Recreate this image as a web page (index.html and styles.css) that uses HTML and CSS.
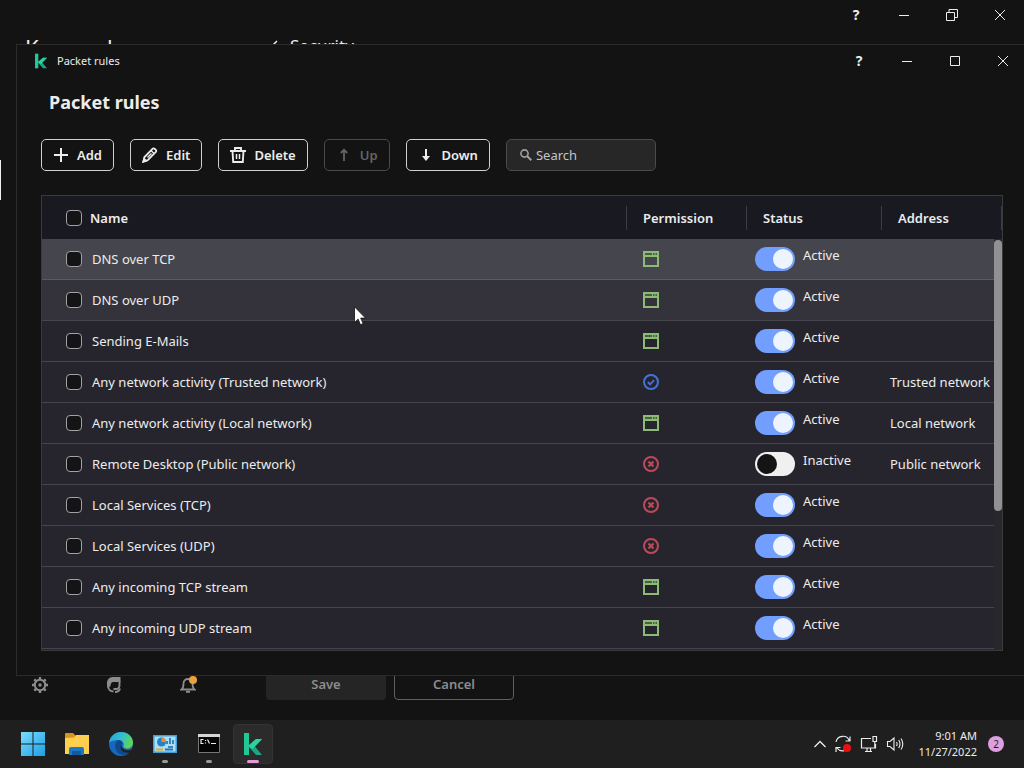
FILE: index.html
```
<!DOCTYPE html>
<html lang="en">

<head>
    <meta charset="UTF-8">
    <meta name="viewport" content="width=device-width, initial-scale=1.0">
    <title>Packet rules</title>
    <link rel="stylesheet" href="styles.css">
</head>

<body>
    <!-- shared icons -->
    <svg class="symbols" aria-hidden="true">
        <symbol id="minimize" viewBox="0 0 12 12"><path d="M1 6.5h10" stroke="currentColor" /></symbol>
        <symbol id="close" viewBox="0 0 12 12"><path d="M1 1l10 10M11 1L1 11" stroke="currentColor" /></symbol>
        <symbol id="maximize" viewBox="0 0 12 12"><path d="M1.5 1.5h9v9h-9z" fill="none" stroke="currentColor" /></symbol>
        <symbol id="restore" viewBox="0 0 12 12"><path d="M.5 3.5h8v8h-8zM3 3V.5h8.500v8H9" fill="none" stroke="currentColor" /></symbol>
        <symbol id="app-rules" viewBox="0 0 16 16"><path d="M1 1h14v14H1z" fill="none" stroke="currentColor" stroke-width="2" /><path d="M1 1h14v5H1z" fill="currentColor" /><path d="M2 3h7M10 3h1.500M12.500 3H14" stroke="#34402f" stroke-width="1.500" /></symbol>
        <symbol id="allowed" viewBox="0 0 16 16"><circle cx="8" cy="8" r="7" fill="none" stroke="currentColor" stroke-width="2" /><path d="M4.800 8l2.300 2.300 4-4.100" fill="none" stroke="currentColor" stroke-width="1.900" /></symbol>
        <symbol id="blocked" viewBox="0 0 16 16"><circle cx="8" cy="8" r="7" fill="none" stroke="currentColor" stroke-width="2" /><path d="M5.500 5.500l5 5M10.500 5.500l-5 5" stroke="currentColor" stroke-width="2.200" /></symbol>
        <symbol id="logo" viewBox="0 0 20 24">
            <path d="M1 1h5v22H1z" fill="#22c796" />
            <path d="M5 14L13 7h6l-7 7.500L19 23h-6z" fill="#1aa583" />
            <path d="M5 14L13 7h6l-9.500 10z" fill="#30cf9d" />
        </symbol>
    </svg>

    <main class="desktop">
        <section class="app-window">
            <header class="titlebar">
                <div class="window-controls">
                    <button class="control help" aria-label="Help">?</button>
                    <button class="control" aria-label="Minimize"><svg><use href="#minimize" /></svg></button>
                    <button class="control" aria-label="Restore"><svg><use href="#restore" /></svg></button>
                    <button class="control" aria-label="Close"><svg><use href="#close" /></svg></button>
                </div>
            </header>
            <div class="app-body">
                <nav class="sidebar">
                    <h2>Kaspersky</h2>
                    <span class="nav-marker"></span>
                    <div class="sidebar-tools">
                        <button class="tool" aria-label="Settings">
                            <svg viewBox="0 0 16 16"><circle cx="8" cy="8" r="5.200" fill="none" stroke="currentColor" stroke-width="2" /><circle cx="8" cy="8" r="1.700" fill="currentColor" /><path d="M8 0v3M8 13v3M0 8h3M13 8h3M2.300 2.300l2 2M11.700 11.700l2 2M2.300 13.700l2-2M11.700 4.300l2-2" stroke="currentColor" stroke-width="2.400" /></svg>
                        </button>
                        <button class="tool" aria-label="Support">
                            <svg viewBox="0 0 16 16"><path d="M14.500 0v5H7Q4.500 5.500 4.500 9L2 11.500C-.5 6 1.500 0 6.500 0z" fill="currentColor" /><path d="M2 8.500c0 4 2.500 6 5.500 6M13.500 4v4.500c0 2-1.500 3.500-4 3.500H7.500M9 15c2.500 0 4.500-1.500 5-3.500" fill="none" stroke="currentColor" stroke-width="1.900" /></svg>
                        </button>
                        <button class="tool" aria-label="Notifications">
                            <svg viewBox="0 0 16 16"><path d="M1.500 12.500c2-1.500 2-3 2-6C3.500 3.500 5.500 2 8 2s4.500 1.500 4.500 4.500c0 3 0 4.500 2 6z" fill="none" stroke="currentColor" stroke-width="1.800" /><path d="M6 14.800h4" stroke="currentColor" stroke-width="2" /></svg>
                            <span class="dot"></span>
                        </button>
                    </div>
                </nav>
                <div class="page">
                    <h2 class="page-title">
                        <svg viewBox="0 0 8 12"><path d="M7 1L2 6l5 5" fill="none" stroke="currentColor" stroke-width="1.500" /></svg>
                        Security
                    </h2>
                    <div class="page-actions">
                        <button class="save">Save</button>
                        <button class="cancel">Cancel</button>
                    </div>
                </div>
            </div>
        </section>

        <section class="dialog">
            <header class="titlebar dialog-titlebar">
                <svg class="logo"><use href="#logo" /></svg>
                <span class="caption">Packet rules</span>
                <div class="window-controls">
                    <button class="control help" aria-label="Help">?</button>
                    <button class="control" aria-label="Minimize"><svg><use href="#minimize" /></svg></button>
                    <button class="control" aria-label="Maximize"><svg><use href="#maximize" /></svg></button>
                    <button class="control" aria-label="Close"><svg><use href="#close" /></svg></button>
                </div>
            </header>
            <div class="dialog-body">
                <h1>Packet rules</h1>
                <div class="toolbar">
                    <button class="btn"><svg viewBox="0 0 16 16"><path d="M8 1v14M1 8h14" stroke="currentColor" stroke-width="2" /></svg>Add</button>
                    <button class="btn"><svg viewBox="0 0 16 16"><path d="M1.500 14.500l1-4.500 8-8.200c1.500-1.300 4.500 1.500 3.500 3L6 13z" fill="none" stroke="currentColor" stroke-width="1.800" /><path d="M9 3.500L12.500 7M5.500 10.500l4-4M1 15l3.500-1L2 11.500z" stroke="currentColor" stroke-width="1.400" fill="currentColor" /></svg>Edit</button>
                    <button class="btn"><svg viewBox="0 0 16 16"><path d="M0 4h16M5 4V1h6v3M2.500 4l.7 11h9.600l.7-11" fill="none" stroke="currentColor" stroke-width="1.900" /><path d="M6.500 7v5M9.500 7v5" stroke="currentColor" stroke-width="1.500" /></svg>Delete</button>
                    <button class="btn" disabled><svg viewBox="0 0 16 16"><path d="M8 3v11M4.800 6L8 2.800 11.200 6" fill="none" stroke="currentColor" stroke-width="1.800" /></svg>Up</button>
                    <button class="btn"><svg viewBox="0 0 16 16"><path d="M8 2v10" stroke="currentColor" stroke-width="2" /><path d="M4 9h8l-4 5z" fill="currentColor" /></svg>Down</button>
                    <label class="search">
                        <svg viewBox="0 0 12 12"><circle cx="4.500" cy="4.500" r="3.600" fill="none" stroke="currentColor" stroke-width="1.600" /><path d="M7 7l4.300 4.300" stroke="currentColor" stroke-width="2" /></svg>
                        <input type="text" placeholder="Search" aria-label="Search">
                    </label>
                </div>

                <div class="rules-container">
                    <table class="rules">
                        <thead>
                            <tr>
                                <th class="col-name"><label class="name"><input type="checkbox" class="check">Name</label></th>
                                <th class="col-permission">Permission</th>
                                <th class="col-status">Status</th>
                                <th class="col-address">Address</th>
                            </tr>
                        </thead>
                        <tbody>
                            <tr class="selected">
                                <td><label class="name"><input type="checkbox" class="check">DNS over TCP</label></td>
                                <td><svg class="permission app-rules"><use href="#app-rules" /></svg></td>
                                <td><label class="status"><input type="checkbox" class="toggle" checked>Active</label></td>
                                <td></td>
                            </tr>
                            <tr class="hovered">
                                <td><label class="name"><input type="checkbox" class="check">DNS over UDP</label></td>
                                <td><svg class="permission app-rules"><use href="#app-rules" /></svg></td>
                                <td><label class="status"><input type="checkbox" class="toggle" checked>Active</label></td>
                                <td></td>
                            </tr>
                            <tr>
                                <td><label class="name"><input type="checkbox" class="check">Sending E-Mails</label></td>
                                <td><svg class="permission app-rules"><use href="#app-rules" /></svg></td>
                                <td><label class="status"><input type="checkbox" class="toggle" checked>Active</label></td>
                                <td></td>
                            </tr>
                            <tr>
                                <td><label class="name"><input type="checkbox" class="check">Any network activity (Trusted network)</label></td>
                                <td><svg class="permission allowed"><use href="#allowed" /></svg></td>
                                <td><label class="status"><input type="checkbox" class="toggle" checked>Active</label></td>
                                <td>Trusted network</td>
                            </tr>
                            <tr>
                                <td><label class="name"><input type="checkbox" class="check">Any network activity (Local network)</label></td>
                                <td><svg class="permission app-rules"><use href="#app-rules" /></svg></td>
                                <td><label class="status"><input type="checkbox" class="toggle" checked>Active</label></td>
                                <td>Local network</td>
                            </tr>
                            <tr>
                                <td><label class="name"><input type="checkbox" class="check">Remote Desktop (Public network)</label></td>
                                <td><svg class="permission blocked"><use href="#blocked" /></svg></td>
                                <td><label class="status"><input type="checkbox" class="toggle">Inactive</label></td>
                                <td>Public network</td>
                            </tr>
                            <tr>
                                <td><label class="name"><input type="checkbox" class="check">Local Services (TCP)</label></td>
                                <td><svg class="permission blocked"><use href="#blocked" /></svg></td>
                                <td><label class="status"><input type="checkbox" class="toggle" checked>Active</label></td>
                                <td></td>
                            </tr>
                            <tr>
                                <td><label class="name"><input type="checkbox" class="check">Local Services (UDP)</label></td>
                                <td><svg class="permission blocked"><use href="#blocked" /></svg></td>
                                <td><label class="status"><input type="checkbox" class="toggle" checked>Active</label></td>
                                <td></td>
                            </tr>
                            <tr>
                                <td><label class="name"><input type="checkbox" class="check">Any incoming TCP stream</label></td>
                                <td><svg class="permission app-rules"><use href="#app-rules" /></svg></td>
                                <td><label class="status"><input type="checkbox" class="toggle" checked>Active</label></td>
                                <td></td>
                            </tr>
                            <tr>
                                <td><label class="name"><input type="checkbox" class="check">Any incoming UDP stream</label></td>
                                <td><svg class="permission app-rules"><use href="#app-rules" /></svg></td>
                                <td><label class="status"><input type="checkbox" class="toggle" checked>Active</label></td>
                                <td></td>
                            </tr>
                        </tbody>
                    </table>
                    <div class="scrollbar"><div class="scrollbar-thumb"></div></div>
                </div>
            </div>
        </section>

        <svg class="cursor" viewBox="0 0 12 20"><path d="M.5.800v15.700l3.600-3.400 2.400 5.600 2.600-1.100-2.400-5.500h4.800z" fill="#fff" stroke="#111" stroke-width=".8" /></svg>
    </main>

    <footer class="taskbar">
        <div class="apps">
            <button class="app" aria-label="Start">
                <svg viewBox="0 0 24 24"><defs><linearGradient id="win" x1="0" y1="0" x2="1" y2="1"><stop offset="0" stop-color="#7bdcfb" /><stop offset="1" stop-color="#1b9fe8" /></linearGradient></defs><path d="M0 0h11.500v11.500H0zM12.500 0H24v11.500H12.500zM0 12.500h11.500V24H0zM12.500 12.500H24V24H12.500z" fill="url(#win)" /></svg>
            </button>
            <button class="app" aria-label="File Explorer">
                <svg viewBox="0 0 24 24"><path d="M0 2q0-1 1-1h7l3 3v3H0z" fill="#d9951b" /><path d="M0 6l9-.5L11 3h13v19H0z" fill="#fcd04e" /><path d="M4 23v-6q0-2 2-2h11q2 0 2 2v6z" fill="#1c77c5" /><path d="M7 19h9v4H7z" fill="#135a9c" /></svg>
            </button>
            <button class="app" aria-label="Edge">
                <svg viewBox="0 0 24 24"><defs><linearGradient id="edge" x1="0" y1="0" x2="1" y2=".4"><stop offset="0" stop-color="#2a9fe0" /><stop offset=".6" stop-color="#35c1c9" /><stop offset="1" stop-color="#5fd455" /></linearGradient></defs><circle cx="12" cy="12" r="12" fill="#1568c0" /><path d="M0 11C1 4 6 0 12 0c7 0 12 5 12 10.500 0 4-3 6-6 6-2.500 0-4-1-3.500-2.500 1-3-1-6-5-6C5 8 1 9 0 11z" fill="url(#edge)" /><path d="M9.500 8C5 10 5 18 10 21.500c3 2 7 2 11-1-5 1.500-9-1-9.500-5-.3-3 1-4 2-3.500C13 9.500 11.500 8 9.500 8z" fill="#114a8b" /><path d="M13.500 11c-2 1-1.500 5 2 6.500 3 1.200 5.500.8 7.500-.5l1 1 0 3-4 0c-6 0-8.500-3-8.500-6 0-2 .8-3.500 2-4z" fill="#202020" /></svg>
            </button>
            <button class="app running" aria-label="Control Panel">
                <svg viewBox="0 0 24 24"><path d="M0 3h24v18H0z" fill="#3e9ed6" /><path d="M1.500 4.500h21v15h-21z" fill="#a9e0f8" /><circle cx="8.500" cy="10" r="4.500" fill="#2580c4" /><path d="M8.500 10V5.500a4.500 4.500 0 0 1 4.500 4.500z" fill="#f28a2c" /><path d="M14 12V9M17 12V6M20 12V8M15 15h5" stroke="#1767a5" stroke-width="1.500" /><path d="M3 17.500h7" stroke="#eba91e" stroke-width="2" /><path d="M12 17.500h8" stroke="#2872be" stroke-width="2" /></svg>
            </button>
            <button class="app running" aria-label="Command Prompt">
                <svg viewBox="0 0 24 24"><path d="M1.500 2.500h21v18h-21z" fill="#050505" stroke="#777" /><path d="M1 2h22v3H1z" fill="#d5d5d5" /><path d="M6.500 7.500H4v4h2.500M8.500 8v1M8.500 10.500v1M10.500 7.500l2 4M14 11.500h5" fill="none" stroke="#eee" stroke-width="1.200" /></svg>
            </button>
            <button class="app active" aria-label="Kaspersky"><svg><use href="#logo" /></svg></button>
        </div>
        <div class="tray">
            <svg class="chevron" viewBox="0 0 12 8"><path d="M.5 7L6 1.500 11.500 7" fill="none" stroke="currentColor" stroke-width="1.300" /></svg>
            <svg viewBox="0 0 18 18"><path d="M2 7a7 7 0 0 1 13.500-1M16 1.500V6h-4.500M15.500 10a7 7 0 0 1-12.500 3M2 17v-4.500h4.500" fill="none" stroke="currentColor" stroke-width="1.200" /><circle cx="13" cy="13" r="4" fill="#e81010" /></svg>
            <svg viewBox="0 0 18 18"><path d="M11 3.500H1.500v9.500h14V9M5 16.500h7M7 13v3M10.500 13v3M13 1.500h3.500v5H13zM14.800 6.500V13" fill="none" stroke="currentColor" stroke-width="1.200" /></svg>
            <svg viewBox="0 0 18 18"><path d="M1.500 6.500H4L8 3v12l-4-3.500H1.500z" fill="none" stroke="currentColor" stroke-width="1.100" /><path d="M10.500 7q1.300 2 0 4M12.700 5q2.600 4 0 8M15 3.500q3.600 5.500 0 11" fill="none" stroke="currentColor" stroke-width="1.100" /></svg>
            <div class="clock">
                <span>9:01 AM</span>
                <span>11/27/2022</span>
            </div>
            <span class="badge">2</span>
        </div>
    </footer>
</body>

</html>
```

FILE: styles.css
```
* {
    box-sizing: border-box;
    margin: 0;
    padding: 0;
}

body {
    font-family: 'Noto Sans', 'Open Sans', sans-serif;
    font-size: 13px;
    line-height: 16px;
    background-color: #131313;
    color: #ececec;
    height: 100vh;
    display: flex;
    flex-direction: column;
    overflow: hidden;
}

button,
input {
    font: inherit;
    color: inherit;
}

button {
    background: none;
    border: none;
}

.symbols {
    display: none;
}

.desktop {
    position: relative;
    flex: 1;
    min-height: 0;
    overflow: hidden;
}

/* title bars */
.titlebar {
    display: flex;
    align-items: center;
    height: 30px;
}

.window-controls {
    display: flex;
    margin-left: auto;
}

.control {
    display: flex;
    align-items: center;
    justify-content: center;
    width: 48px;
    height: 30px;
}

.control svg {
    width: 12px;
    height: 12px;
}

.help {
    font-size: 14px;
    font-weight: 700;
}

/* main window behind the dialog */
.app-window {
    display: flex;
    flex-direction: column;
    height: 100%;
}

.app-body {
    display: flex;
    flex: 1;
}

.sidebar {
    display: flex;
    flex-direction: column;
    width: 250px;
}

.sidebar h2 {
    font-size: 22px;
    font-weight: 400;
    line-height: 26px;
    padding: 4px 25px;
}

.nav-marker {
    width: 1px;
    height: 40px;
    margin-top: 96px;
    background-color: #f0f0f0;
}

.sidebar-tools {
    display: flex;
    gap: 58px;
    margin-top: auto;
    padding: 0 32px 27px;
}

.tool {
    position: relative;
    width: 16px;
    height: 16px;
    color: #8c8c8c;
}

.tool svg {
    display: block;
    width: 16px;
    height: 16px;
}

.dot {
    position: absolute;
    top: -1px;
    right: -1px;
    width: 8px;
    height: 8px;
    border-radius: 50%;
    background-color: #e9a23b;
}

.page {
    display: flex;
    flex-direction: column;
    flex: 1;
    padding: 0 16px 20px;
}

.page-title {
    display: flex;
    align-items: center;
    gap: 12px;
    font-size: 17px;
    font-weight: 400;
    line-height: 24px;
    padding: 4px;
}

.page-title svg {
    width: 8px;
    height: 12px;
}

.page-actions {
    display: flex;
    gap: 8px;
    margin-top: auto;
}

.save,
.cancel {
    width: 120px;
    height: 32px;
    border-radius: 4px;
    font-weight: 600;
    color: #8c8c8c;
}

.save {
    background-color: #252525;
}

.cancel {
    border: 1px solid #5f5f5f;
}

/* dialog */
.dialog {
    position: absolute;
    top: 44px;
    left: 16px;
    right: -4px;
    bottom: 44px;
    background-color: #131313;
    border: 1px solid #2b2b2b;
}

.dialog-titlebar {
    height: 32px;
    padding-left: 17px;
}

.logo {
    width: 14px;
    height: 16px;
}

.caption {
    margin-left: 9px;
    font-size: 11px;
}

.dialog-body {
    padding: 12px 24px;
}

h1 {
    font-size: 18px;
    line-height: 26px;
    padding-left: 8px;
    margin-bottom: 24px;
}

.toolbar {
    display: flex;
    gap: 16px;
    margin-bottom: 24px;
}

.btn {
    display: flex;
    align-items: center;
    gap: 8px;
    height: 32px;
    padding: 0 11px;
    border: 1px solid #d0d0d0;
    border-radius: 5px;
    font-weight: 600;
}

.btn:disabled {
    border-color: #4b4b4b;
    color: #646464;
}

.btn svg {
    width: 16px;
    height: 16px;
}

.search {
    display: flex;
    align-items: center;
    gap: 4px;
    width: 150px;
    height: 32px;
    padding: 0 13px;
    background-color: #272727;
    border: 1px solid #4b4b4b;
    border-radius: 5px;
}

.search svg {
    flex: none;
    width: 12px;
    height: 12px;
    color: #a0a0a0;
}

.search input {
    width: 100%;
    background: none;
    border: none;
    outline: none;
}

.search input::placeholder {
    color: #c4c4c4;
}

/* rules table */
.rules-container {
    position: relative;
    border: 1px solid #3a3a3c;
    padding-bottom: 1px;
    background-color: #26252e;
}

.rules {
    width: 100%;
    table-layout: fixed;
    border-collapse: separate;
    border-spacing: 0;
}

.rules th {
    height: 43px;
    padding: 0 16px;
    text-align: left;
    font-weight: 600;
    background: #191a21 linear-gradient(#3d3d44, #3d3d44) no-repeat right center / 1px 24px;
}

.col-permission {
    width: 120px;
}

.col-status {
    width: 135px;
}

.col-address {
    width: 120px;
}

.rules .col-name {
    padding-left: 24px;
}

.rules td {
    height: 41px;
    padding: 0 8px;
    border-bottom: 1px solid #46454e;
    white-space: nowrap;
}

.rules td:first-child {
    padding-left: 24px;
}

.rules td:nth-child(2) {
    padding-left: 16px;
}

.selected td {
    background-color: #45454d;
}

.rules .selected td {
    border-color: #5b5a63;
}

.hovered td {
    background-color: #34333c;
}

.name {
    display: flex;
    align-items: center;
    gap: 10px;
}

th .name {
    gap: 8px;
}

.check {
    appearance: none;
    width: 16px;
    height: 16px;
    border: 1px solid #a2a2a2;
    border-radius: 4px;
    background-color: #141416;
}

.permission {
    display: block;
    width: 16px;
    height: 16px;
}

.app-rules {
    color: #8dbb76;
}

.allowed {
    color: #4373d8;
}

.blocked {
    color: #bd4a59;
}

.status {
    display: flex;
    gap: 8px;
}

.toggle {
    appearance: none;
    display: flex;
    width: 40px;
    height: 24px;
    padding: 2px;
    border-radius: 12px;
    background-color: #f0f0f0;
}

.toggle::before {
    content: "";
    width: 20px;
    height: 20px;
    border-radius: 50%;
    background-color: #141414;
}

.toggle:checked {
    justify-content: flex-end;
    background-color: #729fff;
}

.toggle:checked::before {
    background-color: #eef4fd;
}

.scrollbar {
    position: absolute;
    top: 43px;
    right: 0;
    bottom: 0;
    width: 8px;
    padding-top: 1px;
    background-color: #27272c;
}

.scrollbar-thumb {
    height: 66%;
    border-radius: 4px;
    background-color: #919191;
}

.cursor {
    position: absolute;
    top: 306px;
    left: 354px;
    width: 12px;
    height: 20px;
}

/* taskbar */
.taskbar {
    display: flex;
    align-items: center;
    justify-content: space-between;
    height: 48px;
    padding: 0 20px 0 13px;
    background-color: #1f1f1f;
}

.apps {
    display: flex;
    gap: 4px;
}

.app {
    position: relative;
    display: flex;
    align-items: center;
    justify-content: center;
    width: 40px;
    height: 40px;
    border: 1px solid transparent;
    border-radius: 4px;
}

.app svg {
    width: 24px;
    height: 24px;
}

.app.active {
    background-color: #2b2b2b;
    border-color: #333;
}

.running::after,
.active::after {
    content: "";
    position: absolute;
    bottom: 0;
    width: 6px;
    height: 3px;
    border-radius: 2px;
    background-color: #9a9a9a;
}

.active::after {
    width: 12px;
    background-color: #e39bdc;
}

.tray {
    display: flex;
    align-items: center;
    gap: 8px;
}

.tray svg {
    width: 18px;
    height: 18px;
}

.tray .chevron {
    width: 12px;
    height: 8px;
}

.clock {
    display: flex;
    flex-direction: column;
    align-items: flex-end;
    margin-left: 6px;
    font-size: 11px;
}

.badge {
    width: 16px;
    height: 16px;
    margin-left: 3px;
    border-radius: 50%;
    background-color: #dc9fe0;
    color: #222;
    font-size: 10px;
    text-align: center;
}
```
